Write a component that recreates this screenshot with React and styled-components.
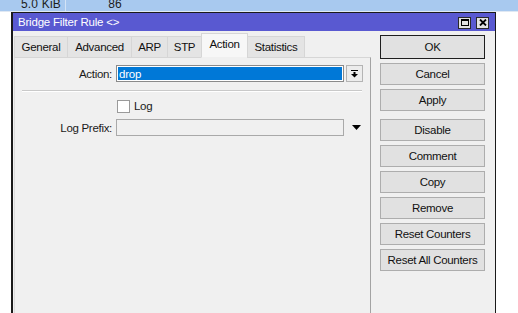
import React from 'react';
import styled, { createGlobalStyle } from 'styled-components';

const Global = createGlobalStyle`
  html, body { margin: 0; padding: 0; background: #ffffff; }
  body {
    font-family: "Liberation Sans", Arial, sans-serif;
    font-size: 11px;
    color: #000;
  }
`;

const Page = styled.div`
  width: 518px;
  height: 313px;
  overflow: hidden;
  display: flex;
  flex-direction: column;
  background: #ffffff;
`;

const ListRow = styled.div`
  flex: none;
  height: 11px;
  border-bottom: 1px solid #dfe8f3;
  background: #a8c9ef;
  display: flex;
  overflow: hidden;
`;

const ListCell = styled.div`
  width: ${p => p.$w}px;
  flex: none;
  box-sizing: border-box;
  border-right: ${p => (p.$divider ? '1px solid #d3e3f6' : 'none')};
  text-align: right;
  padding-right: ${p => p.$pr}px;
  font-size: 12px;
  line-height: 12px;
  margin-top: -2px;
  color: #1c1c1c;
  letter-spacing: 0.2px;
`;

const Window = styled.div`
  flex: 1;
  margin-left: 11px;
  width: 485px;
  box-sizing: border-box;
  border: 1px solid #1a1a1a;
  border-left-width: 2px;
  border-bottom: none;
  background: #f0f0f0;
  display: flex;
  flex-direction: column;
  min-height: 0;
`;

const TitleBar = styled.div`
  flex: none;
  height: 18px;
  background: #5959d1;
  color: #ffffff;
  display: flex;
  align-items: center;
  padding: 0 6px 0 5px;
  font-size: 11.5px;
  letter-spacing: -0.2px;
`;

const TitleText = styled.div`
  flex: 1;
`;

const TitleButtons = styled.div`
  display: flex;
  gap: 5px;
  margin-top: 1px;
`;

const TitleButton = styled.div`
  width: 13px;
  height: 12px;
  box-sizing: border-box;
  border: 1px solid #2a2a2a;
  background: #e2e2e2;
  display: flex;
  align-items: center;
  justify-content: center;
`;

const Body = styled.div`
  flex: 1;
  display: flex;
  min-height: 0;
`;

const LeftPane = styled.div`
  width: 358px;
  flex: none;
  display: flex;
  flex-direction: column;
  padding: 2px 0 0 1px;
  box-sizing: border-box;
`;

const TabRow = styled.div`
  display: flex;
  align-items: flex-end;
  height: 25px;
  flex: none;
  position: relative;
  z-index: 1;
`;

const Tab = styled.div`
  width: ${p => p.$w}px;
  height: ${p => (p.$active ? 25 : 22)}px;
  box-sizing: border-box;
  margin-left: ${p => (p.$first ? 0 : -1)}px;
  border: 1px solid #d6d6d6;
  border-bottom: ${p => (p.$active ? '1px solid #f0f0f0' : '1px solid #d6d6d6')};
  background: ${p => (p.$active ? '#f7f7f7' : '#e4e4e4')};
  display: flex;
  align-items: center;
  justify-content: center;
  padding-bottom: ${p => (p.$active ? 3 : 0)}px;
  font-size: 11.5px;
  letter-spacing: -0.3px;
  color: #111;
`;

const TabPanel = styled.div`
  flex: 1;
  margin-top: -1px;
  box-sizing: border-box;
  border-top: 1px solid #d6d6d6;
  border-left: 1px solid #dcdcdc;
  border-right: 1px solid #a3a3a3;
  padding: 7px 0 0 0;
`;

const FieldRow = styled.div`
  display: flex;
  align-items: center;
  height: 17px;
  margin-top: ${p => p.$mt || 0}px;
`;

const Label = styled.div`
  width: 101px;
  flex: none;
  text-align: right;
  padding-right: 4px;
  box-sizing: border-box;
  font-size: 11.5px;
  letter-spacing: -0.3px;
  color: #1a1a1a;
`;

const Field = styled.div`
  width: 228px;
  height: 17px;
  flex: none;
  box-sizing: border-box;
  border: 1px solid ${p => (p.$selected ? '#8a8a8a' : '#a9a9a9')};
  background: ${p => (p.$selected ? '#0078d7' : '#f0f0f0')};
  box-shadow: ${p => (p.$selected ? 'inset 0 0 0 1px #ffffff' : 'none')};
  color: #ffffff;
  display: flex;
  align-items: center;
  padding-left: 2px;
  font-size: 11.5px;
  letter-spacing: -0.2px;
`;

const DropButton = styled.div`
  width: 17px;
  height: 17px;
  margin-left: 2px;
  box-sizing: border-box;
  border: 1px solid #b4b4b4;
  background: #ececec;
  display: flex;
  align-items: center;
  justify-content: center;
`;

const PlainArrow = styled.div`
  width: 17px;
  height: 17px;
  margin-left: 4px;
  display: flex;
  align-items: center;
  justify-content: center;
`;

const Separator = styled.div`
  margin: 8px 8px 0 7px;
  height: 1px;
  background: #c9c9c9;
  border-bottom: 1px solid #ffffff;
`;

const CheckRow = styled.div`
  display: flex;
  align-items: center;
  height: 14px;
  margin-top: 7px;
  padding-left: 102px;
`;

const CheckBox = styled.div`
  width: 13px;
  height: 13px;
  box-sizing: border-box;
  border: 1px solid #9a9a9a;
  background: #ffffff;
  margin-right: 4px;
`;

const CheckLabel = styled.div`
  font-size: 11.5px;
  letter-spacing: -0.3px;
  color: #1a1a1a;
`;

const RightPane = styled.div`
  flex: 1;
  display: flex;
  flex-direction: column;
  padding: 4px 0 0 9px;
  box-sizing: border-box;
`;

const Button = styled.div`
  width: 105px;
  height: ${p => (p.$default ? 24 : 22)}px;
  box-sizing: border-box;
  border: 1px solid ${p => (p.$default ? '#1e1e1e' : '#adadad')};
  background: #e1e1e1;
  display: flex;
  align-items: center;
  justify-content: center;
  margin-bottom: 4px;
  margin-top: ${p => p.$mt || 0}px;
  font-size: 11.5px;
  letter-spacing: -0.3px;
  color: #111;
`;

const MaxIcon = () => (
  <svg width="8" height="7" viewBox="0 0 8 7">
    <rect x="0.5" y="0.5" width="7" height="6" fill="none" stroke="#000" strokeWidth="1" />
    <line x1="0" y1="1" x2="8" y2="1" stroke="#000" strokeWidth="2" />
  </svg>
);

const CloseIcon = () => (
  <svg width="8" height="7" viewBox="0 0 8 7">
    <path d="M1 0.5 L7 6.5 M7 0.5 L1 6.5" stroke="#000" strokeWidth="1.8" />
  </svg>
);

const DropIcon = () => (
  <svg width="9" height="9" viewBox="0 0 9 9">
    <line x1="1" y1="1.5" x2="8" y2="1.5" stroke="#000" strokeWidth="1" />
    <rect x="3.5" y="3" width="2" height="2" fill="#000" />
    <path d="M1 5 L8 5 L4.5 8.5 Z" fill="#000" />
  </svg>
);

const TriIcon = () => (
  <svg width="9" height="5" viewBox="0 0 9 5">
    <path d="M0 0 L9 0 L4.5 5 Z" fill="#000" />
  </svg>
);

const tabs = [
  { name: 'General', w: 54 },
  { name: 'Advanced', w: 65 },
  { name: 'ARP', w: 37 },
  { name: 'STP', w: 35 },
  { name: 'Action', w: 47, active: true },
  { name: 'Statistics', w: 58 },
];

const buttons = [
  { name: 'OK', def: true },
  { name: 'Cancel' },
  { name: 'Apply' },
  { name: 'Disable', mt: 4 },
  { name: 'Comment' },
  { name: 'Copy' },
  { name: 'Remove' },
  { name: 'Reset Counters' },
  { name: 'Reset All Counters' },
];

export default function App() {
  return (
    <Page>
      <Global />
      <ListRow>
        <ListCell $w={66} $pr={4} $divider>5.0 KiB</ListCell>
        <ListCell $w={57} $pr={1}>86</ListCell>
      </ListRow>
      <Window>
        <TitleBar>
          <TitleText>Bridge Filter Rule &lt;&gt;</TitleText>
          <TitleButtons>
            <TitleButton><MaxIcon /></TitleButton>
            <TitleButton><CloseIcon /></TitleButton>
          </TitleButtons>
        </TitleBar>
        <Body>
          <LeftPane>
            <TabRow>
              {tabs.map((t, i) => (
                <Tab key={t.name} $w={t.w} $active={t.active} $first={i === 0}>
                  {t.name}
                </Tab>
              ))}
            </TabRow>
            <TabPanel>
              <FieldRow>
                <Label>Action:</Label>
                <Field $selected>drop</Field>
                <DropButton><DropIcon /></DropButton>
              </FieldRow>
              <Separator />
              <CheckRow>
                <CheckBox />
                <CheckLabel>Log</CheckLabel>
              </CheckRow>
              <FieldRow $mt={6}>
                <Label>Log Prefix:</Label>
                <Field />
                <PlainArrow><TriIcon /></PlainArrow>
              </FieldRow>
            </TabPanel>
          </LeftPane>
          <RightPane>
            {buttons.map(b => (
              <Button key={b.name} $default={b.def} $mt={b.mt}>
                {b.name}
              </Button>
            ))}
          </RightPane>
        </Body>
      </Window>
    </Page>
  );
}
